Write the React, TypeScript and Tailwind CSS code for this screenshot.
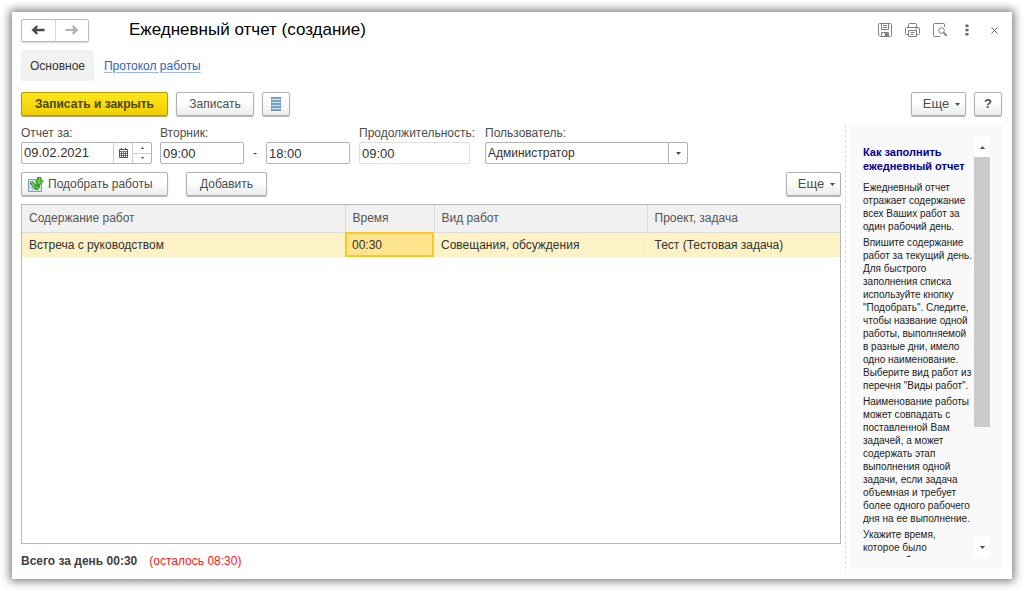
import { useState } from 'react';
import type { ReactNode } from 'react';
import clsx from 'clsx';

const HELP_TEXT = [
  'Ежедневный отчет\nотражает содержание\nвсех Ваших работ за\nодин рабочий день.',
  'Впишите содержание\nработ за текущий день.\nДля быстрого\nзаполнения списка\nиспользуйте кнопку\n"Подобрать". Следите,\nчтобы название одной\nработы, выполняемой\nв разные дни, имело\nодно наименование.\nВыберите вид работ из\nперечня "Виды работ".',
  'Наименование работы\nможет совпадать с\nпоставленной Вам\nзадачей, а может\nсодержать этап\nвыполнения одной\nзадачи, если задача\nобъемная и требует\nболее одного рабочего\nдня на ее выполнение.',
  'Укажите время,\nкоторое было\nна эту работу.',
];

const ROWS = [
  {
    content: 'Встреча с руководством',
    time: '00:30',
    kind: 'Совещания, обсуждения',
    task: 'Тест (Тестовая задача)',
  },
];

type ButtonProps = {
  children: ReactNode;
  className?: string;
  label?: string;
  primary?: boolean;
};

function Button({ children, className, label, primary }: ButtonProps) {
  return (
    <button
      type="button"
      aria-label={label}
      className={clsx(
        'flex h-6 items-center rounded-xs border',
        primary
          ? 'border-[#b39b00] bg-linear-to-b from-[#ffe71a] to-[#efcf00] font-bold text-[#4d4600] shadow-[0_1px_1px_#a9a173]'
          : 'border-[#b0b0b0] bg-linear-to-b from-white from-40% to-[#ececec] text-[#4d4d4d] shadow-[0_1px_1px_#b5b5b5]',
        className,
      )}
    >
      {children}
    </button>
  );
}

function Caret({ up }: { up?: boolean }) {
  return (
    <svg width="5" height="3" viewBox="0 0 5 3" className="shrink-0" aria-hidden="true">
      <path d={up ? 'M0 3h5L2.5 0z' : 'M0 0h5L2.5 3z'} fill="#4d4d4d" />
    </svg>
  );
}

function MoreButton() {
  return (
    <Button className="w-[55px] justify-center gap-[6px] pl-[6px] text-[13px]">
      Еще <Caret />
    </Button>
  );
}

function Arrow({ back }: { back?: boolean }) {
  return (
    <svg width="14" height="10" viewBox="0 0 14 10" aria-hidden="true">
      {back ? (
        <path d="M.5 5 5.5.2 7 1.600 5.500 3.800H13.500V6.200H5.500L7 8.400 5.500 9.800z" fill="#4a4a4a" />
      ) : (
        <path d="M13.500 5 8.500.2 7 1.600 8.500 3.900H.5V6.100H8.500L7 8.400 8.500 9.800z" fill="#b3b3b3" />
      )}
    </svg>
  );
}

function SaveIcon() {
  return (
    <svg width="14" height="14" viewBox="0 0 14 14" fill="none" stroke="#808080" aria-hidden="true">
      <path d="M.5 1.5q0-1 1-1h11q1 0 1 1v11q0 1-1 1H2L.5 12z" />
      <path d="M3.5.5v6h7v-6M5 2.5h4M5 4.5h4M3.5 13.5v-4h7v4" />
      <path d="M7 10.5h2.5v2H7z" fill="#707070" />
    </svg>
  );
}

function PrintIcon() {
  return (
    <svg width="15" height="14" viewBox="0 0 15 14" fill="none" stroke="#808080" aria-hidden="true">
      <path d="M3.5 4V1.500q0-1 1-1h6q1 0 1 1V4M3.5 11.500h-2q-1 0-1-1v-5q0-1 1-1h12q1 0 1 1v5q0 1-1 1h-2" />
      <path d="M3.5 7.5h8v6h-8zM5.5 9.5h4M5.5 11.5h3M10.5 5.8h2" />
    </svg>
  );
}

function PreviewIcon() {
  return (
    <svg width="14" height="14" viewBox="0 0 14 14" fill="none" stroke="#808080" aria-hidden="true">
      <path d="M7 13.5H1.5q-1 0-1-1v-11q0-1 1-1h9q1 0 1 1V4" />
      <circle cx="8.5" cy="7.5" r="2.8" />
      <path d="m10.5 9.5 3 3.300" strokeWidth="1.8" />
    </svg>
  );
}

function ListIcon() {
  return (
    <svg width="10" height="14" viewBox="0 0 10 14" aria-hidden="true">
      <path d="M0 0h10v14H0z" fill="#8fb0c7" />
      <path d="M1 2.5h8M1 5.5h8M1 8.5h8M1 11.5h8" stroke="#c9dfec" />
      <path d="M0 .5h10M0 13.5h10M0 4h10M0 7h10M0 10h10" stroke="#6d94ae" />
    </svg>
  );
}

function PickIcon() {
  return (
    <svg width="16" height="15" viewBox="0 0 16 15" className="shrink-0" aria-hidden="true">
      <path d="M.5 2.5h13v12H.5z" fill="#dfe6f4" stroke="#8494bd" />
      <path d="M4.500 2.500v12M9.500 2.500v12M.5 6.500h13M.5 10.500h13" stroke="#b4bfdc" />
      <path d="M2 4.500h3l2.500 3 2-2 3 3.500-2.500 4H7L5 10 2 7z" fill="#35a32b" />
      <path d="m3.500 5.500 3 4M8 9.500l1.500 2" stroke="#b7edae" />
      <path d="M9.500.5h3.500V4h2.300L11.200 8.500 7.200 4h2.300z" fill="#5ad534" stroke="#2b931f" />
    </svg>
  );
}

function CalendarIcon() {
  return (
    <svg width="9" height="10" viewBox="0 0 9 10" fill="none" stroke="#555" aria-hidden="true">
      <path d="M.5 1.500h8v8h-8zM2.500 0v2M6.500 0v2" />
      <path d="M0 3.500h9M1 5.500h7M1 7.500h7M2.500 4v5M4.500 4v5M6.500 4v5" strokeWidth=".8" />
    </svg>
  );
}

function TimeField({ id, label, value, readOnly }: { id: string; label: string; value: string; readOnly?: boolean }) {
  return (
    <input
      id={id}
      aria-label={label}
      defaultValue={value}
      readOnly={readOnly}
      className={clsx(
        'h-[22px] rounded-xs border bg-white px-[2px] text-[13px] outline-none',
        readOnly ? 'w-[111px] border-[#dedede]' : 'w-[84px] border-[#b3b3b3]',
      )}
    />
  );
}

function Header() {
  return (
    <header className="flex h-6 items-center">
      <div className="flex h-[23px] w-[68px] rounded-xs border border-[#bdbdbd] shadow-[0_1px_1px_#d5d5d5]">
        <button type="button" aria-label="Назад" className="flex flex-1 items-center justify-center border-r border-[#d5d5d5]">
          <Arrow back />
        </button>
        <button type="button" aria-label="Вперед" className="flex flex-1 items-center justify-center">
          <Arrow />
        </button>
      </div>
      <h1 className="ml-10 flex-1 text-[17px] leading-6 text-black">Ежедневный отчет (создание)</h1>
      <div className="flex items-center gap-[13px]">
        <button type="button" aria-label="Сохранить"><SaveIcon /></button>
        <button type="button" aria-label="Печать"><PrintIcon /></button>
        <button type="button" aria-label="Просмотр"><PreviewIcon /></button>
        <button type="button" aria-label="Меню" className="flex w-[14px] justify-center">
          <svg width="4" height="12" viewBox="0 0 4 12" fill="#666" aria-hidden="true">
            <path d="M.5.5h3v2.500h-3zM.5 4.800h3v2.500h-3zM.5 9h3v2.500h-3z" />
          </svg>
        </button>
        <button type="button" aria-label="Закрыть" className="flex w-[15px] justify-center">
          <svg width="7" height="7" viewBox="0 0 7 7" stroke="#666" aria-hidden="true">
            <path d="m.5.5 6 6M6.500.5l-6 6" />
          </svg>
        </button>
      </div>
    </header>
  );
}

function Filters() {
  const [date, setDate] = useState('09.02.2021');

  return (
    <div className="flex items-end">
      <div className="flex w-[139px] flex-col">
        <label htmlFor="date" className="leading-[16px]">Отчет за:</label>
        <div className="mt-px flex h-[22px] w-[131px] rounded-xs border border-[#b3b3b3] text-[13px] text-[#333]">
          <input
            id="date"
            value={date}
            onChange={(e) => setDate(e.target.value)}
            className="w-[91px] px-[2px] outline-none"
          />
          <button type="button" aria-label="Календарь" className="flex w-5 items-center justify-center border-x border-[#cfcfcf]">
            <CalendarIcon />
          </button>
          <div className="flex flex-1 flex-col">
            <button type="button" aria-label="Больше" className="flex flex-1 items-center justify-center border-b border-[#cfcfcf]">
              <svg width="3" height="2" viewBox="0 0 3 2"><path d="M0 2h3L1.500 0z" fill="#444" /></svg>
            </button>
            <button type="button" aria-label="Меньше" className="flex flex-1 items-center justify-center">
              <svg width="3" height="2" viewBox="0 0 3 2"><path d="M0 0h3L1.500 2z" fill="#444" /></svg>
            </button>
          </div>
        </div>
      </div>
      <div className="flex w-[199px] flex-col">
        <label htmlFor="from" className="leading-[16px]">Вторник:</label>
        <div className="mt-px flex items-center text-[#333]">
          <TimeField id="from" label="Начало" value="09:00" />
          <span className="w-[22px] text-center">-</span>
          <TimeField id="to" label="Окончание" value="18:00" />
        </div>
      </div>
      <div className="flex w-[126px] flex-col">
        <label htmlFor="duration" className="leading-[16px] whitespace-nowrap">Продолжительность:</label>
        <div className="mt-px flex text-[#333]">
          <TimeField id="duration" label="Продолжительность" value="09:00" readOnly />
        </div>
      </div>
      <div className="flex w-[203px] flex-col">
        <label htmlFor="user" className="leading-[16px]">Пользователь:</label>
        <div className="relative mt-px flex text-[#333]">
          <select id="user" className="h-[22px] w-full appearance-none rounded-xs border border-[#b3b3b3] bg-white px-[2px] outline-none">
            <option>Администратор</option>
          </select>
          <span className="pointer-events-none absolute inset-y-px right-px flex w-[19px] items-center justify-center border-l border-[#b3b3b3]">
            <Caret />
          </span>
        </div>
      </div>
    </div>
  );
}

function WorkTable() {
  return (
    <div className="mt-2 min-h-0 flex-1 border border-[#b8b8b8] bg-white">
      <table className="w-full table-fixed border-collapse text-left">
        <colgroup>
          <col className="w-[323px]" />
          <col className="w-[89px]" />
          <col className="w-[213px]" />
          <col />
        </colgroup>
        <thead>
          <tr className="h-[27px] border-b border-[#dcdcdc] bg-[#f1f1f1] text-[#555]">
            <th className="border-r border-[#dadada] px-[7px] font-normal">Содержание работ</th>
            <th className="border-r border-[#dadada] px-[7px] font-normal">Время</th>
            <th className="border-r border-[#dadada] px-[7px] font-normal">Вид работ</th>
            <th className="px-[7px] font-normal">Проект, задача</th>
          </tr>
        </thead>
        <tbody>
          {ROWS.map((row) => (
            <tr key={row.content} className="h-[25px] bg-[#fdf1c6] text-[#333]">
              <td className="px-[7px]">{row.content}</td>
              <td className="bg-[#fee48c] px-[7px] outline-2 -outline-offset-2 outline-[#fbc926]">{row.time}</td>
              <td className="border-r border-[#fff8e0] px-[7px]">{row.kind}</td>
              <td className="px-[7px]">{row.task}</td>
            </tr>
          ))}
        </tbody>
      </table>
    </div>
  );
}

function HelpPanel() {
  return (
    <aside className="ml-1 flex w-[157px] shrink-0 border-l border-dashed border-[#dcdcdc] pl-1">
      <div className="flex min-w-0 flex-1 bg-[#f9f9f9] pt-3 pr-3 pb-3 pl-[13px]">
        <div className="min-w-0 flex-1 overflow-hidden pt-2 text-[10px] leading-[13px] whitespace-nowrap text-[#222]">
          <h2 className="mb-2 text-[11px] leading-[14px] font-bold text-[#000096]">
            Как заполнить
            <br />
            ежедневный отчет
          </h2>
          {HELP_TEXT.map((text) => (
            <p key={text} className="mb-[3px] whitespace-pre">{text}</p>
          ))}
        </div>
        <div className="flex w-4 flex-col">
          <button type="button" aria-label="Вверх" className="flex h-5 items-center justify-center bg-white">
            <Caret up />
          </button>
          <div className="flex-1">
            <div className="h-[71%] bg-[#cacaca]" />
          </div>
          <button type="button" aria-label="Вниз" className="flex h-5 items-center justify-center bg-white">
            <Caret />
          </button>
        </div>
      </div>
    </aside>
  );
}

export default function App() {
  return (
    <div className="h-screen bg-white p-3 font-['Liberation_Sans',Arial,sans-serif] text-[12px] text-[#4d4d4d]">
      <main className="flex h-full flex-col bg-white pt-[6px] pr-[10px] pb-[10px] pl-[9px] shadow-[0_0_9px_2px_#777]">
        <Header />
        <nav className="mt-2 flex h-[31px] items-center">
          <a href="#main" className="flex h-full items-center rounded-xs bg-[#f1f1f1] px-[9px] text-[#333]">Основное</a>
          <a href="#log" className="ml-[10px] text-[#2a64c0] underline decoration-[#9ab8e6] underline-offset-2">Протокол работы</a>
        </nav>
        <div className="mt-[11px] flex gap-2">
          <Button primary className="w-[147px] justify-center">Записать и закрыть</Button>
          <Button className="w-[78px] justify-center">Записать</Button>
          <Button className="w-7 justify-center" label="Список"><ListIcon /></Button>
          <div className="flex-1" />
          <MoreButton />
          <Button className="w-7 justify-center text-[13px] font-bold">?</Button>
        </div>
        <div className="mt-[9px] flex min-h-0 flex-1">
          <section className="flex min-w-0 flex-1 flex-col">
            <Filters />
            <div className="mt-2 flex">
              <Button className="w-[147px] gap-1 pl-[6px]"><PickIcon />Подобрать работы</Button>
              <Button className="ml-[18px] w-[81px] justify-center">Добавить</Button>
              <div className="flex-1" />
              <MoreButton />
            </div>
            <WorkTable />
            <p className="mt-[9px] flex gap-3 leading-4">
              <b className="text-[#404040]">Всего за день 00:30</b>
              <span className="text-[#ff1414]">(осталось 08:30)</span>
            </p>
          </section>
          <HelpPanel />
        </div>
      </main>
    </div>
  );
}
